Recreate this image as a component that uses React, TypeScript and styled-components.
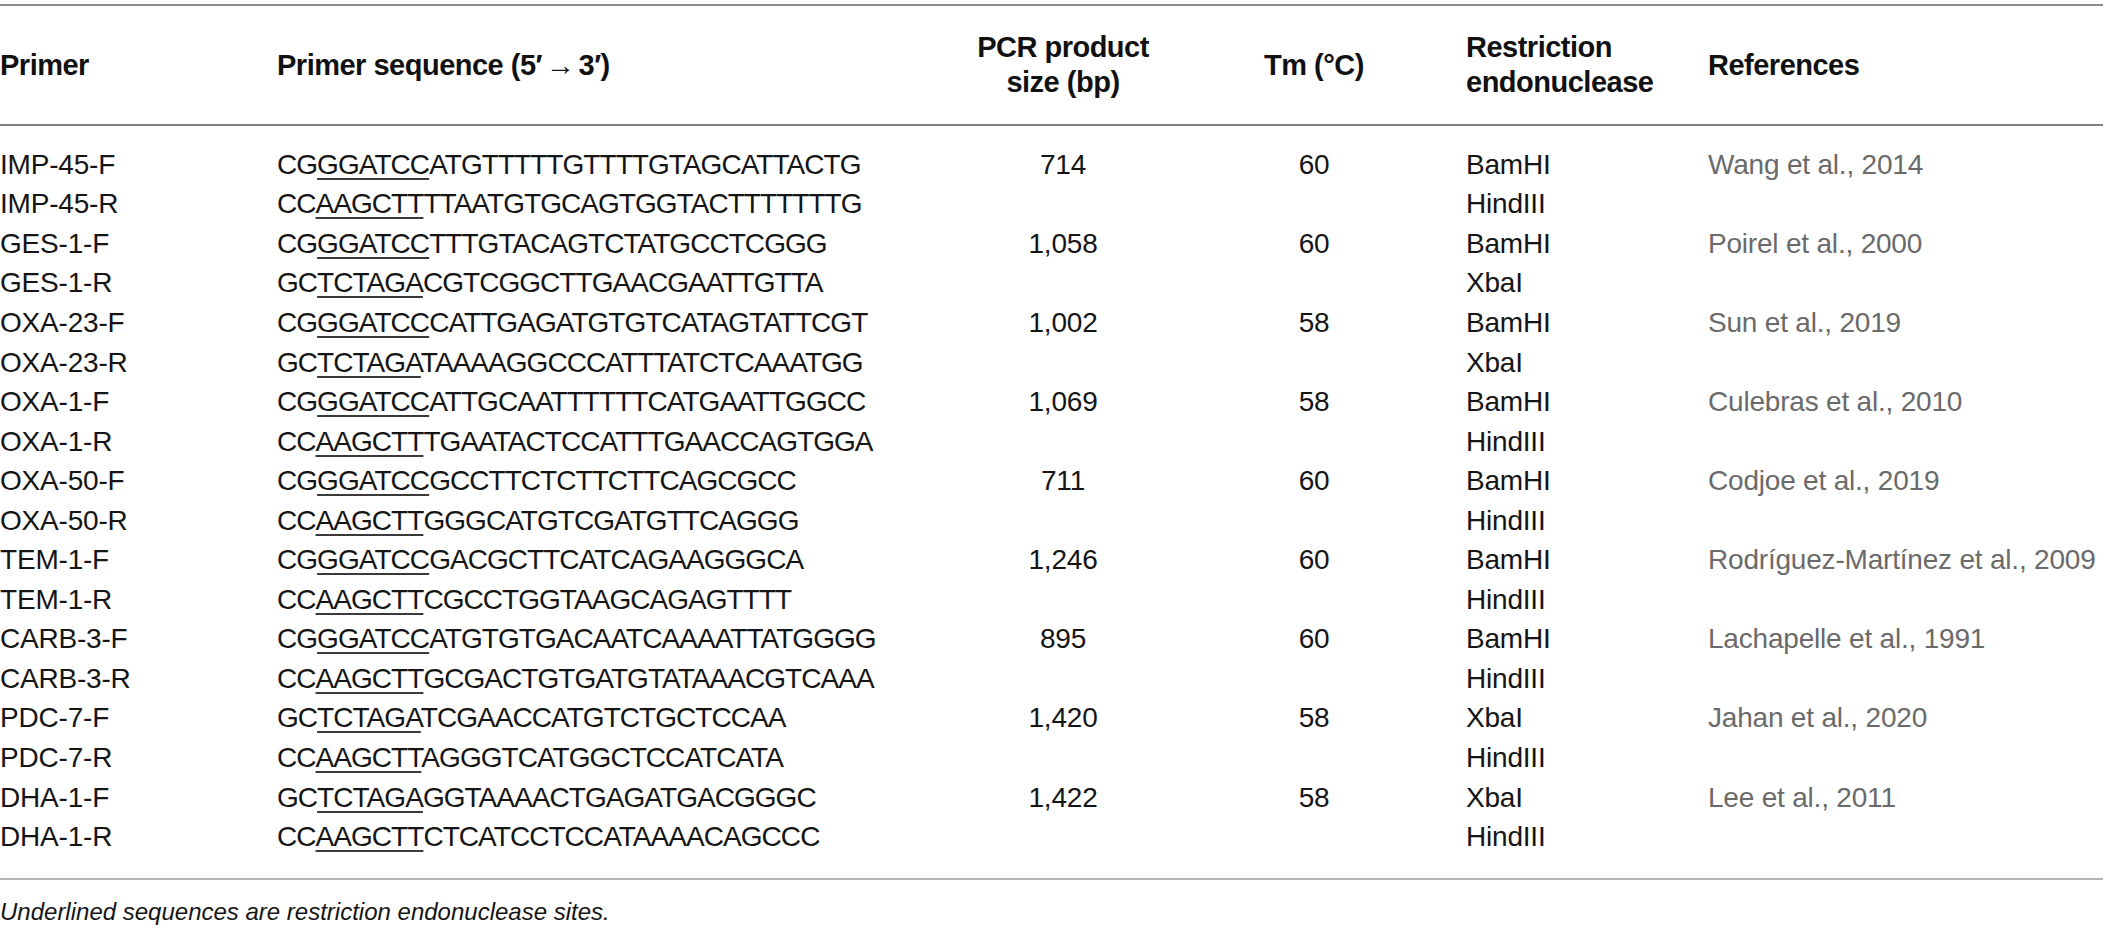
import React from "react";
import styled, { createGlobalStyle } from "styled-components";

const GlobalStyle = createGlobalStyle`
  html, body {
    margin: 0;
    padding: 0;
    background: #ffffff;
    overflow: hidden;
  }
  body {
    font-family: "Liberation Sans", Arial, Helvetica, sans-serif;
    color: #111111;
  }
`;

const COLS = "277px 687px 198px 304px 242px 1fr";

const Page = styled.div`
  width: 2103px;
  padding-top: 4px;
`;

const Table = styled.div`
  border-top: 2px solid #8c8c8c;
`;

const HeaderRow = styled.div`
  display: grid;
  grid-template-columns: ${COLS};
  align-items: center;
  height: 118px;
  border-bottom: 2px solid #7f7f7f;
`;

const HeadCell = styled.div<{ $center?: boolean }>`
  font-weight: 700;
  font-size: 29px;
  line-height: 35px;
  letter-spacing: -0.5px;
  color: #111111;
  text-align: ${(p) => (p.$center ? "center" : "left")};
  white-space: nowrap;
`;

const Arrow = styled.span`
  margin: 0 4px;
`;

const Body = styled.div`
  padding: 19px 0 21px;
  border-bottom: 2px solid #b4b4b4;
`;

const Row = styled.div`
  display: grid;
  grid-template-columns: ${COLS};
  align-items: center;
  height: 39.55px;
`;

const Cell = styled.div<{ $center?: boolean; $muted?: boolean; $seq?: boolean }>`
  font-size: 28px;
  line-height: 34px;
  white-space: nowrap;
  text-align: ${(p) => (p.$center ? "center" : "left")};
  color: ${(p) => (p.$muted ? "#6a6a6a" : "#151515")};
  letter-spacing: ${(p) => (p.$seq ? "-0.95px" : "-0.2px")};
`;

const Site = styled.span`
  text-decoration: underline;
  text-decoration-thickness: 2px;
  text-underline-offset: 4px;
  text-decoration-color: #3a3a3a;
`;

const Note = styled.p`
  margin: 0;
  padding-top: 17px;
  font-style: italic;
  font-size: 24px;
  line-height: 30px;
  color: #151515;
  white-space: nowrap;
`;

type Primer = {
  name: string;
  pre: string;
  site: string;
  post: string;
  size?: string;
  tm?: string;
  enzyme: string;
  ref?: string;
};

const rows: Primer[] = [
  { name: "IMP-45-F", pre: "CG", site: "GGATCC", post: "ATGTTTTTGTTTTGTAGCATTACTG", size: "714", tm: "60", enzyme: "BamHI", ref: "Wang et al., 2014" },
  { name: "IMP-45-R", pre: "CC", site: "AAGCTT", post: "TTAATGTGCAGTGGTACTTTTTTTG", enzyme: "HindIII" },
  { name: "GES-1-F", pre: "CG", site: "GGATCC", post: "TTTGTACAGTCTATGCCTCGGG", size: "1,058", tm: "60", enzyme: "BamHI", ref: "Poirel et al., 2000" },
  { name: "GES-1-R", pre: "GC", site: "TCTAGA", post: "CGTCGGCTTGAACGAATTGTTA", enzyme: "XbaI" },
  { name: "OXA-23-F", pre: "CG", site: "GGATCC", post: "CATTGAGATGTGTCATAGTATTCGT", size: "1,002", tm: "58", enzyme: "BamHI", ref: "Sun et al., 2019" },
  { name: "OXA-23-R", pre: "GC", site: "TCTAGA", post: "TAAAAGGCCCATTTATCTCAAATGG", enzyme: "XbaI" },
  { name: "OXA-1-F", pre: "CG", site: "GGATCC", post: "ATTGCAATTTTTTCATGAATTGGCC", size: "1,069", tm: "58", enzyme: "BamHI", ref: "Culebras et al., 2010" },
  { name: "OXA-1-R", pre: "CC", site: "AAGCTT", post: "TGAATACTCCATTTGAACCAGTGGA", enzyme: "HindIII" },
  { name: "OXA-50-F", pre: "CG", site: "GGATCC", post: "GCCTTCTCTTCTTCAGCGCC", size: "711", tm: "60", enzyme: "BamHI", ref: "Codjoe et al., 2019" },
  { name: "OXA-50-R", pre: "CC", site: "AAGCTT", post: "GGGCATGTCGATGTTCAGGG", enzyme: "HindIII" },
  { name: "TEM-1-F", pre: "CG", site: "GGATCC", post: "GACGCTTCATCAGAAGGGCA", size: "1,246", tm: "60", enzyme: "BamHI", ref: "Rodríguez-Martínez et al., 2009" },
  { name: "TEM-1-R", pre: "CC", site: "AAGCTT", post: "CGCCTGGTAAGCAGAGTTTT", enzyme: "HindIII" },
  { name: "CARB-3-F", pre: "CG", site: "GGATCC", post: "ATGTGTGACAATCAAAATTATGGGG", size: "895", tm: "60", enzyme: "BamHI", ref: "Lachapelle et al., 1991" },
  { name: "CARB-3-R", pre: "CC", site: "AAGCTT", post: "GCGACTGTGATGTATAAACGTCAAA", enzyme: "HindIII" },
  { name: "PDC-7-F", pre: "GC", site: "TCTAGA", post: "TCGAACCATGTCTGCTCCAA", size: "1,420", tm: "58", enzyme: "XbaI", ref: "Jahan et al., 2020" },
  { name: "PDC-7-R", pre: "CC", site: "AAGCTT", post: "AGGGTCATGGCTCCATCATA", enzyme: "HindIII" },
  { name: "DHA-1-F", pre: "GC", site: "TCTAGA", post: "GGTAAAACTGAGATGACGGGC", size: "1,422", tm: "58", enzyme: "XbaI", ref: "Lee et al., 2011" },
  { name: "DHA-1-R", pre: "CC", site: "AAGCTT", post: "CTCATCCTCCATAAAACAGCCC", enzyme: "HindIII" },
];

export default function App() {
  return (
    <Page>
      <GlobalStyle />
      <Table>
        <HeaderRow>
          <HeadCell>Primer</HeadCell>
          <HeadCell>
            Primer sequence (5′<Arrow>→</Arrow>3′)
          </HeadCell>
          <HeadCell $center>
            PCR product
            <br />
            size (bp)
          </HeadCell>
          <HeadCell $center>Tm (°C)</HeadCell>
          <HeadCell>
            Restriction
            <br />
            endonuclease
          </HeadCell>
          <HeadCell>References</HeadCell>
        </HeaderRow>
        <Body>
          {rows.map((r) => (
            <Row key={r.name}>
              <Cell>{r.name}</Cell>
              <Cell $seq>
                {r.pre}
                <Site>{r.site}</Site>
                {r.post}
              </Cell>
              <Cell $center>{r.size ?? ""}</Cell>
              <Cell $center>{r.tm ?? ""}</Cell>
              <Cell>{r.enzyme}</Cell>
              <Cell $muted>{r.ref ?? ""}</Cell>
            </Row>
          ))}
        </Body>
      </Table>
      <Note>Underlined sequences are restriction endonuclease sites.</Note>
    </Page>
  );
}
